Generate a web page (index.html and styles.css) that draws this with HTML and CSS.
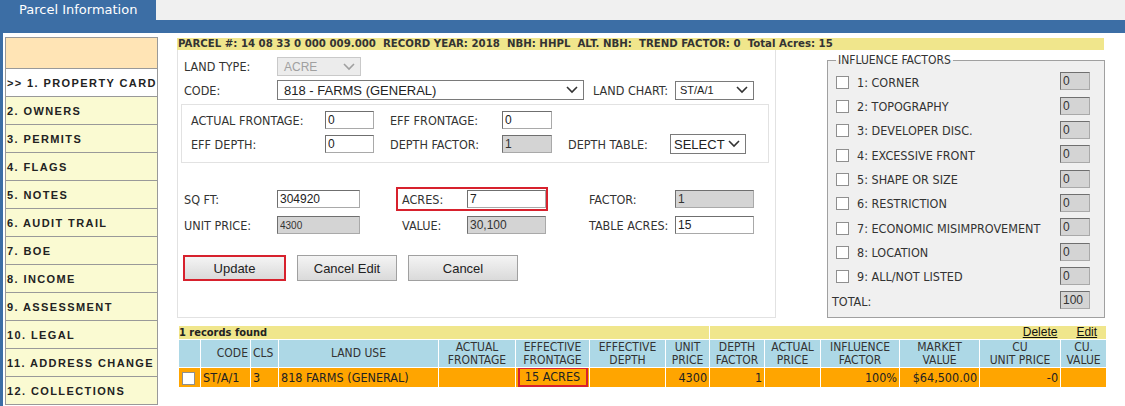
FILE: index.html
```html
<!DOCTYPE html>
<html lang="en">

<head>
    <meta charset="UTF-8">
    <meta name="viewport" content="width=device-width, initial-scale=1.0">
    <title>Parcel Information</title>
    <link rel="stylesheet" href="styles.css">
</head>

<body>
    <div class="top">
        <div class="tab">Parcel Information</div>
        <div class="tab-fill"></div>
    </div>
    <div class="bluebar"></div>

    <div class="page">
        <ul class="nav">
            <li class="nav-head"></li>
            <li class="active">&gt;&gt; 1. PROPERTY CARD</li>
            <li>2. OWNERS</li>
            <li>3. PERMITS</li>
            <li>4. FLAGS</li>
            <li>5. NOTES</li>
            <li>6. AUDIT TRAIL</li>
            <li>7. BOE</li>
            <li>8. INCOME</li>
            <li>9. ASSESSMENT</li>
            <li>10. LEGAL</li>
            <li>11. ADDRESS CHANGE</li>
            <li>12. COLLECTIONS</li>
        </ul>

        <div class="main">
            <div class="parcel-bar">PARCEL #: 14 08 33 0 000 009.000&nbsp; RECORD YEAR: 2018&nbsp; NBH: HHPL&nbsp; ALT. NBH:&nbsp; TREND FACTOR: 0&nbsp; Total Acres: 15</div>

            <div class="content">
                <div class="form-panel">
                    <div class="row r-landtype">
                        <span class="lbl w93">LAND TYPE:</span>
                        <div class="select disabled w84">
                            <span>ACRE</span>
                            <svg width="12" height="8" viewBox="0 0 12 8"><polyline points="1,1 6,6 11,1" fill="none" stroke="#a0a0a0" stroke-width="1.6"/></svg>
                        </div>
                    </div>
                    <div class="row r-code">
                        <span class="lbl w93">CODE:</span>
                        <div class="select big w307">
                            <span>818 - FARMS (GENERAL)</span>
                            <svg width="12" height="8" viewBox="0 0 12 8"><polyline points="1,1 6,6 11,1" fill="none" stroke="#333" stroke-width="1.6"/></svg>
                        </div>
                        <span class="lbl chart-lbl">LAND CHART:</span>
                        <div class="select small-sel w79">
                            <span>ST/A/1</span>
                            <svg width="12" height="8" viewBox="0 0 12 8"><polyline points="1,1 6,6 11,1" fill="none" stroke="#333" stroke-width="1.6"/></svg>
                        </div>
                    </div>

                    <div class="frontage-box">
                        <div class="row r-front">
                            <span class="lbl w134">ACTUAL FRONTAGE:</span>
                            <input class="txt w49" value="0">
                            <span class="lbl w112 gap16">EFF FRONTAGE:</span>
                            <input class="txt w50" value="0">
                        </div>
                        <div class="row r-front r-depth">
                            <span class="lbl w134">EFF DEPTH:</span>
                            <input class="txt w49" value="0">
                            <span class="lbl w112 gap16">DEPTH FACTOR:</span>
                            <input class="txt w50" value="1" disabled>
                            <span class="lbl w102 gap16">DEPTH TABLE:</span>
                            <div class="select big sel-table">
                                <span>SELECT</span>
                                <svg width="12" height="8" viewBox="0 0 12 8"><polyline points="1,1 6,6 11,1" fill="none" stroke="#333" stroke-width="1.6"/></svg>
                            </div>
                        </div>
                    </div>

                    <div class="row r-acres">
                        <span class="lbl w93">SQ FT:</span>
                        <input class="txt w83" value="304920">
                        <div class="acres-box hl">
                            <span class="lbl w65">ACRES:</span>
                            <input class="txt w79" value="7">
                        </div>
                        <span class="lbl w86 gap41">FACTOR:</span>
                        <input class="txt w79" value="1" disabled>
                    </div>
                    <div class="row r-acres">
                        <span class="lbl w93">UNIT PRICE:</span>
                        <input class="txt w83 small" value="4300" disabled>
                        <div class="acres-box">
                            <span class="lbl w65">VALUE:</span>
                            <input class="txt w79" value="30,100" disabled>
                        </div>
                        <span class="lbl w86 gap41">TABLE ACRES:</span>
                        <input class="txt w79" value="15">
                    </div>

                    <div class="buttons">
                        <button class="btn btn-update">Update</button>
                        <button class="btn">Cancel Edit</button>
                        <button class="btn btn-wide">Cancel</button>
                    </div>
                </div>

                <fieldset class="influence">
                    <legend>INFLUENCE FACTORS</legend>
                    <div class="inf-row"><input type="checkbox" class="chk"><span>1: CORNER</span><input class="txt inf-val" value="0" disabled></div>
                    <div class="inf-row"><input type="checkbox" class="chk"><span>2: TOPOGRAPHY</span><input class="txt inf-val" value="0" disabled></div>
                    <div class="inf-row"><input type="checkbox" class="chk"><span>3: DEVELOPER DISC.</span><input class="txt inf-val" value="0" disabled></div>
                    <div class="inf-row"><input type="checkbox" class="chk"><span>4: EXCESSIVE FRONT</span><input class="txt inf-val" value="0" disabled></div>
                    <div class="inf-row"><input type="checkbox" class="chk"><span>5: SHAPE OR SIZE</span><input class="txt inf-val" value="0" disabled></div>
                    <div class="inf-row"><input type="checkbox" class="chk"><span>6: RESTRICTION</span><input class="txt inf-val" value="0" disabled></div>
                    <div class="inf-row"><input type="checkbox" class="chk"><span>7: ECONOMIC MISIMPROVEMENT</span><input class="txt inf-val" value="0" disabled></div>
                    <div class="inf-row"><input type="checkbox" class="chk"><span>8: LOCATION</span><input class="txt inf-val" value="0" disabled></div>
                    <div class="inf-row"><input type="checkbox" class="chk"><span>9: ALL/NOT LISTED</span><input class="txt inf-val" value="0" disabled></div>
                    <div class="inf-row inf-total"><span>TOTAL:</span><input class="txt inf-val" value="100" disabled></div>
                </fieldset>
            </div>

            <table class="records">
                <colgroup>
                    <col style="width:22px"><col style="width:50px"><col style="width:28px"><col style="width:160px">
                    <col style="width:77px"><col style="width:74px"><col style="width:76px"><col style="width:44px">
                    <col style="width:55px"><col style="width:56px"><col style="width:79px"><col style="width:80px">
                    <col style="width:81px"><col style="width:46px">
                </colgroup>
                <tr class="found">
                    <td colspan="8">1 records found</td>
                    <td colspan="6" class="links"><a href="#">Delete</a><a href="#">Edit</a></td>
                </tr>
                <tr class="head">
                    <th></th>
                    <th class="right">CODE</th>
                    <th class="left">CLS</th>
                    <th>LAND USE</th>
                    <th>ACTUAL<br>FRONTAGE</th>
                    <th>EFFECTIVE<br>FRONTAGE</th>
                    <th>EFFECTIVE<br>DEPTH</th>
                    <th>UNIT<br>PRICE</th>
                    <th>DEPTH<br>FACTOR</th>
                    <th>ACTUAL<br>PRICE</th>
                    <th>INFLUENCE<br>FACTOR</th>
                    <th>MARKET<br>VALUE</th>
                    <th>CU<br>UNIT PRICE</th>
                    <th>CU.<br>VALUE</th>
                </tr>
                <tr class="data">
                    <td><input type="checkbox" class="chk"></td>
                    <td>ST/A/1</td>
                    <td>3</td>
                    <td>818 FARMS (GENERAL)</td>
                    <td></td>
                    <td class="eff"><span class="hl-cell">15 ACRES</span></td>
                    <td></td>
                    <td class="right">4300</td>
                    <td class="right">1</td>
                    <td></td>
                    <td class="right">100%</td>
                    <td class="right">$64,500.00</td>
                    <td class="right">-0</td>
                    <td></td>
                </tr>
            </table>
        </div>
    </div>
</body>
</html>
```

FILE: styles.css
```css
body {
    margin: 0;
    background-color: #ffffff;
    font-family: "DejaVu Sans Condensed", "DejaVu Sans", sans-serif;
    font-size: 12.5px;
    color: #333333;
}

/* header tab + blue strip */
.top {
    display: flex;
    height: 20px;
}

.tab {
    width: 156px;
    background-color: #3c6ea5;
    color: #ffffff;
    font-family: "DejaVu Sans", sans-serif;
    font-size: 13px;
    line-height: 20px;
    padding-left: 19px;
    box-sizing: border-box;
}

.tab-fill {
    flex: 1;
    background-color: #f0f0f0;
}

.bluebar {
    height: 13px;
    background-color: #3c6ea5;
}

.page {
    display: flex;
    align-items: flex-start;
    border-left: 3px solid #3c6ea5;
    height: 373px;
    overflow: hidden;
}

/* left menu */
.nav {
    list-style: none;
    margin: 4px 0 0 2px;
    padding: 0;
    width: 151px;
    border: 1px solid #999999;
    background-color: #fafad2;
}

.nav li {
    height: 27px;
    line-height: 28px;
    border-top: 1px solid #999999;
    padding-left: 1px;
    font-family: "Liberation Sans", Arial, sans-serif;
    font-size: 11px;
    font-weight: bold;
    letter-spacing: 1.4px;
    color: #222222;
    white-space: nowrap;
}

.nav li.nav-head {
    height: 30px;
    border-top: none;
    background-color: #ffe4b5;
}

.nav li.active {
    background-color: #ffffff;
}

/* main area */
.main {
    margin: 5px 0 0 19px;
    width: 929px;
}

.parcel-bar {
    width: 927px;
    height: 12px;
    line-height: 12px;
    background-color: #f0e68c;
    font-family: "DejaVu Sans", sans-serif;
    font-size: 10.2px;
    font-weight: bold;
    color: #333333;
    padding-left: 1px;
    box-sizing: border-box;
    white-space: nowrap;
}

.content {
    display: flex;
    align-items: flex-start;
}

.form-panel {
    width: 599px;
    height: 268px;
    border: 1px solid #e2e2e2;
    border-top: none;
    box-sizing: border-box;
    padding-left: 6px;
}

.row {
    display: flex;
    align-items: center;
}

.lbl {
    flex-shrink: 0;
    white-space: nowrap;
}

.w65 { width: 65px; }
.w86 { width: 86px; }
.w93 { width: 93px; }
.w102 { width: 102px; }
.w112 { width: 112px; }
.w134 { width: 134px; }
.gap16 { margin-left: 16px; }
.gap41 { margin-left: 41px; }

.r-landtype {
    margin-top: 7px;
    height: 19px;
}

.r-code {
    margin-top: 4px;
    height: 20px;
}

.chart-lbl {
    margin-left: 9px;
    width: 82px;
}

/* fake selects */
.select {
    display: flex;
    align-items: center;
    justify-content: space-between;
    box-sizing: border-box;
    height: 19px;
    border: 1px solid #7a7a7a;
    background-color: #ffffff;
    padding: 0 5px 0 6px;
    font-family: "Liberation Sans", Arial, sans-serif;
    font-size: 12px;
    color: #222222;
}

.select.disabled {
    background-color: #ececec;
    border-color: #c9c9c9;
    color: #a0a0a0;
}

.select.big {
    font-size: 13px;
    height: 20px;
}

.select.small-sel {
    font-size: 11px;
    padding-left: 4px;
}

.w84 { width: 84px; }
.w307 { width: 307px; }
.w79 { width: 79px; }

.sel-table {
    width: 76px;
    height: 21px;
    font-size: 14px;
    padding-left: 3px;
}

/* text inputs */
.txt {
    box-sizing: border-box;
    height: 18px;
    margin: 0;
    padding: 0 2px;
    border: 1px solid #a9a9a9;
    border-top-color: #6f6f6f;
    border-left-color: #6f6f6f;
    background-color: #ffffff;
    font-family: "Liberation Sans", Arial, sans-serif;
    font-size: 12px;
    color: #222222;
}

.txt:disabled {
    background-color: #d4d4d4;
    color: #333333;
}

.txt.small {
    font-size: 10px;
}

.w49 { width: 49px; }
.w50 { width: 50px; }
.w83 { width: 83px; }

.frontage-box {
    margin: 4px 0 0 -3px;
    width: 588px;
    height: 59px;
    box-sizing: border-box;
    border: 1px solid #e2e2e2;
    padding: 6px 0 0 9px;
}

.r-front {
    height: 18px;
}

.r-depth {
    margin-top: 6px;
}

.r-acres {
    height: 24px;
    margin-top: 2px;
}

.frontage-box + .r-acres {
    margin-top: 24px;
}

.acres-box {
    display: flex;
    align-items: center;
    margin-left: 36px;
    width: 152px;
    height: 24px;
    box-sizing: border-box;
    border: 2px solid transparent;
    padding-left: 4px;
}

.hl {
    border-color: #d7212d;
}

/* buttons */
.buttons {
    display: flex;
    gap: 11px;
    margin: 18px 0 0 -1px;
}

.btn {
    width: 100px;
    height: 26px;
    box-sizing: border-box;
    border: 1px solid #a0a0a0;
    background: linear-gradient(#f4f4f4, #dadada);
    font-family: "Liberation Sans Narrow", "Liberation Sans", Arial, sans-serif;
    font-size: 13px;
    color: #222222;
    padding: 0;
}

.btn-update {
    width: 103px;
    border: 2px solid #d7212d;
}

.btn-wide {
    width: 110px;
}

/* influence factors */
.influence {
    margin: 4px 0 0 51px;
    width: 278px;
    height: 264px;
    box-sizing: border-box;
    border: 1px solid #a0a0a0;
    background-color: #f0f0f0;
    padding: 3px 14px 0 8px;
}

.influence legend {
    padding: 0 2px;
    margin-left: 0;
    line-height: 13px;
    font-size: 12px;
}

.inf-row {
    display: flex;
    align-items: center;
    height: 24.35px;
}

.inf-row span {
    margin-left: 8px;
}

.inf-total span {
    margin-left: -4px;
}

.inf-val {
    margin-left: auto;
    width: 30px;
    margin-top: -2px;
}

.chk {
    appearance: none;
    -webkit-appearance: none;
    margin: 0;
    width: 13px;
    height: 13px;
    border: 1px solid #8f8f8f;
    background-color: #ffffff;
    box-sizing: border-box;
}

/* results table */
.records {
    margin-top: 7px;
    margin-left: 1px;
    width: 928px;
    border-collapse: collapse;
    table-layout: fixed;
}

.records td,
.records th {
    border: 1px solid #ffffff;
    padding: 0 2px;
    font-weight: normal;
    white-space: nowrap;
    overflow: hidden;
}

.found td {
    background-color: #f0e68c;
    height: 13px;
    line-height: 13px;
    font-size: 11px;
    font-weight: bold;
    color: #222222;
    padding-left: 0;
}

.found .links {
    text-align: right;
    font-weight: normal;
    padding-right: 9px;
}

.links a {
    color: #111111;
    font-family: "Liberation Sans", Arial, sans-serif;
    font-size: 12px;
    margin-left: 19px;
}

.head th {
    background-color: #add8e6;
    height: 27px;
    font-size: 12px;
    line-height: 13px;
    text-align: center;
    color: #333333;
}

.head th.right {
    text-align: right;
}

.head th.left {
    text-align: left;
}

.data td {
    background-color: #ffa500;
    height: 18px;
    line-height: 18px;
    color: #222222;
}

.data td.right {
    text-align: right;
}

.data .chk {
    vertical-align: middle;
    margin-left: 1px;
}

.data td.eff {
    padding: 0;
}

.hl-cell {
    display: block;
    width: 70px;
    height: 20px;
    margin: -1px auto 0;
    box-sizing: border-box;
    border: 2px solid #d7212d;
    line-height: 16px;
    text-align: center;
}
```
